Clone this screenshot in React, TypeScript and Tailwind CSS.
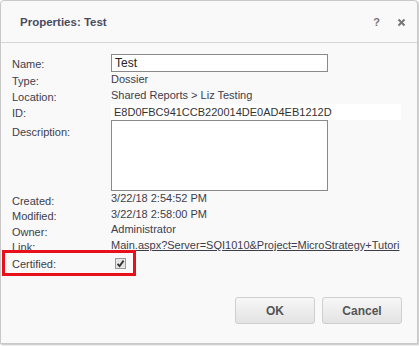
export default function App() {
  const font = { fontFamily: '"Liberation Sans", Arial, sans-serif' }

  return (
    <div className="w-[419px] h-[346px] bg-white" style={font}>
      <div className="w-[418px] h-[344px] bg-[#f9f9f9] border border-[#c8c8c8] rounded-t-[4px] shadow-[1px_1px_2px_rgba(0,0,0,0.25)] flex flex-col text-[11px] text-[#3d3d4c]">
        {/* Header */}
        <div className="h-[42px] border-b border-[#d6d6d6] flex items-center pl-[19px] pr-[11px] shrink-0">
          <h1 className="text-[11.5px] font-bold text-[#4b4b5e] flex-1 pt-[2px]">Properties: Test</h1>
          <span className="text-[11px] font-bold text-[#777] mr-[17px] pt-[2px]">?</span>
          <svg width="9" height="9" viewBox="0 0 9 9" className="mt-[2px]">
            <path d="M1.5 1.5 L7.5 7.5 M7.5 1.5 L1.5 7.5" stroke="#777" strokeWidth="2" />
          </svg>
        </div>

        {/* Body */}
        <div className="pt-[11px] flex flex-col">
          <div className="flex h-[18px] items-center">
            <div className="w-[110px] pl-[11px] pt-[2px]">Name:</div>
            <div className="w-[217px] h-[18px] border border-[#8a8a8a] bg-white px-[3px] text-[12px] leading-[16px] text-[#222]">Test</div>
          </div>
          <div className="flex h-[16px] items-center">
            <div className="w-[110px] pl-[11px] pt-[3px]">Type:</div>
            <div className="pb-[1px]">Dossier</div>
          </div>
          <div className="flex h-[16px] items-center">
            <div className="w-[110px] pl-[11px] pt-[3px]">Location:</div>
            <div className="pb-[1px]">Shared Reports &gt; Liz Testing</div>
          </div>
          <div className="flex h-[16px] items-center">
            <div className="w-[110px] pl-[11px] pt-[3px]">ID:</div>
            <div className="w-[290px] h-[16px] bg-white pl-[3px] leading-[16px] text-[#333]">E8D0FBC941CCB220014DE0AD4EB1212D</div>
          </div>
          <div className="flex h-[71px] items-start">
            <div className="w-[110px] pl-[11px] pt-[4px]">Description:</div>
            <div className="w-[217px] h-[71px] border border-[#8a8a8a] bg-white" />
          </div>
          <div className="flex h-[16px] items-center">
            <div className="w-[110px] pl-[11px] pt-[4px]">Created:</div>
            <div className="pb-[1px]">3/22/18 2:54:52 PM</div>
          </div>
          <div className="flex h-[15px] items-center">
            <div className="w-[110px] pl-[11px] pt-[4px]">Modified:</div>
            <div className="pb-[1px]">3/22/18 2:58:00 PM</div>
          </div>
          <div className="flex h-[16px] items-center">
            <div className="w-[110px] pl-[11px] pt-[4px]">Owner:</div>
            <div className="pb-[1px]">Administrator</div>
          </div>
          <div className="flex h-[15px] items-center">
            <div className="w-[110px] pl-[11px] pt-[4px]">Link:</div>
            <div className="whitespace-nowrap underline pb-[1px]">Main.aspx?Server=SQI1010&amp;Project=MicroStrategy+Tutori</div>
          </div>
          <div className="relative flex h-[20px] items-center">
            <div className="absolute left-[1px] top-[-3px] w-[134px] h-[26px] border-[3px] border-[#e8101a]" />
            <div className="w-[110px] pl-[11px] pt-[3px]">Certified:</div>
            <div className="ml-[4px] w-[11px] h-[11px] border border-[#9a9a9a] bg-[#e6e6e6] flex items-center justify-center">
              <svg width="9" height="9" viewBox="0 0 9 9">
                <path d="M1.5 4.8 L3.6 7 L7.6 1.6" stroke="#333" strokeWidth="1.8" fill="none" />
              </svg>
            </div>
          </div>
        </div>

        {/* Footer */}
        <div className="flex justify-end gap-[7px] pr-[15px] mt-[24px]">
          <button className="w-[80px] h-[27px] rounded-[3px] border border-[#cfcfcf] bg-gradient-to-b from-[#f7f7f7] to-[#e3e3e3] text-[12px] font-bold text-[#555]" style={font}>OK</button>
          <button className="w-[80px] h-[27px] rounded-[3px] border border-[#cfcfcf] bg-gradient-to-b from-[#f7f7f7] to-[#e3e3e3] text-[12px] font-bold text-[#555]" style={font}>Cancel</button>
        </div>
      </div>
    </div>
  )
}
